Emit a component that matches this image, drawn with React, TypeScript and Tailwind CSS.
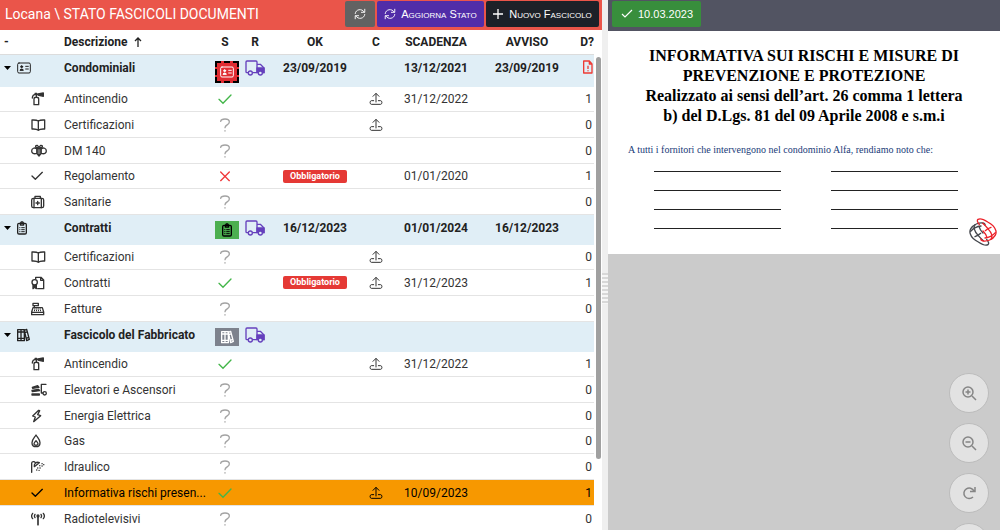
import React, { useState } from 'react';
import clsx from 'clsx';

type IconName =
  | 'card' | 'clipboard' | 'books' | 'extinguisher' | 'book' | 'bee' | 'check' | 'medkit'
  | 'certificate' | 'register' | 'elevator' | 'bolt' | 'flame' | 'shower' | 'antenna';

type Status = 'ok' | 'unknown' | 'missing';

interface Entry {
  icon: IconName;
  name: string;
  status: Status;
  required?: boolean;
  upload?: boolean;
  due?: string;
  docs: number;
  selected?: boolean;
}

interface Group {
  icon: IconName;
  name: string;
  badge: string;
  ok?: string;
  due?: string;
  notice?: string;
  alert?: boolean;
  entries: Entry[];
}

const groups: Group[] = [
  {
    icon: 'card',
    name: 'Condominiali',
    badge: 'h-[22px] bg-[#e02d33] text-white border-2 border-dashed border-black',
    ok: '23/09/2019',
    due: '13/12/2021',
    notice: '23/09/2019',
    alert: true,
    entries: [
      { icon: 'extinguisher', name: 'Antincendio', status: 'ok', upload: true, due: '31/12/2022', docs: 1 },
      { icon: 'book', name: 'Certificazioni', status: 'unknown', upload: true, docs: 0 },
      { icon: 'bee', name: 'DM 140', status: 'unknown', docs: 0 },
      { icon: 'check', name: 'Regolamento', status: 'missing', required: true, due: '01/01/2020', docs: 1 },
      { icon: 'medkit', name: 'Sanitarie', status: 'unknown', docs: 0 },
    ],
  },
  {
    icon: 'clipboard',
    name: 'Contratti',
    badge: 'h-[18px] bg-[#4caf50] text-black',
    ok: '16/12/2023',
    due: '01/01/2024',
    notice: '16/12/2023',
    entries: [
      { icon: 'book', name: 'Certificazioni', status: 'unknown', upload: true, docs: 0 },
      { icon: 'certificate', name: 'Contratti', status: 'ok', required: true, upload: true, due: '31/12/2023', docs: 1 },
      { icon: 'register', name: 'Fatture', status: 'unknown', docs: 0 },
    ],
  },
  {
    icon: 'books',
    name: 'Fascicolo del Fabbricato',
    badge: 'h-[18px] bg-[#7d828d] text-white',
    entries: [
      { icon: 'extinguisher', name: 'Antincendio', status: 'ok', upload: true, due: '31/12/2022', docs: 1 },
      { icon: 'elevator', name: 'Elevatori e Ascensori', status: 'unknown', docs: 0 },
      { icon: 'bolt', name: 'Energia Elettrica', status: 'unknown', docs: 0 },
      { icon: 'flame', name: 'Gas', status: 'unknown', docs: 0 },
      { icon: 'shower', name: 'Idraulico', status: 'unknown', docs: 0 },
      { icon: 'check', name: 'Informativa rischi presen...', status: 'ok', upload: true, due: '10/09/2023', docs: 1, selected: true },
      { icon: 'antenna', name: 'Radiotelevisivi', status: 'unknown', docs: 0 },
    ],
  },
];

// Drawn on a 42 unit tall grid, shown at a third of that size
const icons: Record<IconName, { width: number; art: React.ReactNode }> = {
  card: {
    width: 42,
    art: (
      <>
        <rect x="2" y="6" width="38" height="30" rx="4" strokeWidth="3" />
        <circle cx="14" cy="17" r="3" fill="currentColor" strokeWidth="3" />
        <path d="M9 27c0-4 10-4 10 0z" fill="currentColor" strokeWidth="3" />
        <path d="M26 16h8M26 24h8" strokeWidth="3" />
      </>
    ),
  },
  clipboard: {
    width: 30,
    art: (
      <>
        <rect x="2" y="7" width="26" height="32" rx="4" />
        <path d="M10 12V7l3-4h4l3 4v5z" />
        <path d="M14 20h8M14 26h8M14 32h8M8 20h1M8 26h1M8 32h1" strokeWidth="3" />
      </>
    ),
  },
  books: {
    width: 39,
    art: (
      <>
        <path d="M2 5h10v33H2zM12 5h10v33H12zM2 12h20M2 31h20" />
        <path d="M22 7l7-3 8 30-8 4zM24 14l7-3M28 31l7-3" />
      </>
    ),
  },
  extinguisher: {
    width: 48,
    art: (
      <>
        <path d="M9 38V21c0-7 14-7 14 0v17zM16 15V7M4 18C4 10 9 7 16 7h5M12 4h5" />
        <path d="M21 6l16-3v10l-16-4z" fill="currentColor" />
      </>
    ),
  },
  book: {
    width: 48,
    art: <path d="M22 9C16 5 8 6 3 6v27c7 0 14-1 19 4 5-5 12-4 19-4V6c-5 0-13-1-19 3zm0 0v27" />,
  },
  bee: {
    width: 48,
    art: (
      <>
        <path d="M18 15C11 9 2 13 2 21c0 7 6 10 16 7zM30 15c7-6 16-2 16 6 0 7-6 10-16 7z" />
        <path d="M18 14h12v15l-6 7-6-7zM24 12v23" />
        <path d="M20 11c-9 1-7-8-1-7l5 6 5-6c6-1 8 8-1 7" />
      </>
    ),
  },
  check: { width: 48, art: <path d="M3 21l10 10L34 10" /> },
  medkit: {
    width: 48,
    art: (
      <>
        <rect x="2" y="10" width="36" height="28" rx="5" />
        <path d="M12 10V4h16v6M9 10v28M31 10v28M20 19v10M15 24h10" />
      </>
    ),
  },
  certificate: {
    width: 48,
    art: (
      <>
        <path d="M14 9V4h16l8 8v26H20M29 4v9h9" />
        <circle cx="11" cy="19" r="8" />
        <path d="M6 26v12l5-4 5 4V26" fill="currentColor" />
      </>
    ),
  },
  register: {
    width: 48,
    art: (
      <>
        <path d="M6 17h28l4 13v8H2v-8zM2 31h36M10 17v-6M6 4h16v7H6z" />
        <path d="M10 21h20M9 26h22" strokeDasharray="3 3" strokeWidth="4" strokeLinecap="butt" />
      </>
    ),
  },
  elevator: {
    width: 48,
    art: (
      <>
        <path d="M4 13l16-5 4 5-19 3zM3 22l20-3 3 4-22 3zM3 33h22v3H3z" fill="currentColor" />
        <path d="M45 4H31v26h4" />
        <circle cx="41" cy="31" r="5" />
      </>
    ),
  },
  bolt: { width: 48, art: <path d="M23 4L5 21l8 3-5 14 21-18-9-3 6-12z" /> },
  flame: {
    width: 48,
    art: (
      <>
        <path d="M15 3C10 11 3 16 3 26c0 8 5 12 12 12s12-4 12-12c0-10-7-15-12-23z" />
        <path d="M15 20c-3 4-6 6-6 10 0 5 12 5 12 0 0-4-3-6-6-10z" />
      </>
    ),
  },
  shower: {
    width: 48,
    art: (
      <>
        <path d="M2 37V10c0-6 8-7 11-2" />
        <path d="M10 20c-2-10 7-16 15-12z" />
        <path d="M26 17h.5M33 11h.5M20 24h.5M27 24h.5M33 18h.5M17 30h.5M24 31h.5M38 14h.5" />
      </>
    ),
  },
  antenna: {
    width: 48,
    art: (
      <>
        <path d="M21 14v24" strokeWidth="5" />
        <circle cx="21" cy="12" r="3" fill="currentColor" />
        <path d="M12 7c-2 3-2 7 0 10M30 7c2 3 2 7 0 10M5 4c-4 5-4 11 0 16M37 4c4 5 4 11 0 16" />
      </>
    ),
  },
};

const Icon: React.FC<{ name: IconName }> = ({ name }) => {
  const { width, art } = icons[name];
  return (
    <svg
      width={width / 3}
      height={14}
      viewBox={`0 0 ${width} 42`}
      fill="none"
      stroke="currentColor"
      strokeWidth="4"
      strokeLinecap="round"
      strokeLinejoin="round"
      aria-hidden="true"
    >
      {art}
    </svg>
  );
};

const StatusIcon: React.FC<{ status: Status }> = ({ status }) => (
  <svg width="14" height="14" viewBox="0 0 42 42" fill="none" strokeWidth="4" strokeLinecap="round" className="mx-auto">
    {status === 'ok' && <path d="M3 22l12 12L39 9" stroke="#43b649" />}
    {status === 'missing' && <path d="M8 9l26 26M34 9L8 35" stroke="#f0383a" />}
    {status === 'unknown' && (
      <path d="M8 10c1-5 5-7 13-7 9 0 13 3 13 9 0 9-13 8-13 17M21 38v1" stroke="#a3a3a3" strokeLinejoin="round" />
    )}
  </svg>
);

const UploadIcon = () => (
  <svg width="14" height="14" viewBox="0 0 42 42" fill="none" stroke="currentColor" strokeWidth="3" strokeLinejoin="round" strokeLinecap="round" className="mx-auto">
    <path d="M21 30V5M12 13l9-9 9 9M14 26H7c-5 0-5 11 0 11h28c5 0 5-11 0-11h-7" />
  </svg>
);

const TruckIcon = () => (
  <svg width="20" height="16" viewBox="0 0 60 48" fill="none" stroke="#6540bd" strokeWidth="4" strokeLinejoin="round" className="mx-auto">
    <path d="M10 38H6c-2 0-3-1-3-3V6c0-2 1-3 3-3h27c2 0 3 1 3 3v32H22M36 13h10l11 11v14h-3" />
    <path d="M36 24h21v14h-4a7 7 0 0 0-13 0h-4z" fill="#6540bd" />
    <circle cx="16" cy="39" r="6" fill="#e0eef6" />
    <circle cx="46" cy="39" r="6" fill="#e0eef6" />
  </svg>
);

const AlertFileIcon = () => (
  <svg width="10" height="14" viewBox="0 0 30 42" fill="none" stroke="#ee3b35" strokeWidth="4" strokeLinejoin="round" className="ml-auto">
    <path d="M2 3h17l8 9v27H2zM19 3v9h8M15 17v10M15 31v3" />
  </svg>
);

const SyncIcon = () => (
  <svg width="12" height="12" viewBox="0 0 39 39" fill="none" stroke="currentColor" strokeWidth="3" strokeLinecap="round" strokeLinejoin="round">
    <path d="M4 18C5 4 26 0 33 13M35 4v10H24M35 21C34 35 13 39 6 26M4 35V25h11" />
  </svg>
);

const GroupRow: React.FC<{ group: Group; open: boolean; onToggle: () => void }> = ({ group, open, onToggle }) => (
  <tr className={clsx('bg-[#e0eef6] font-bold align-top text-[#222]', group.alert ? 'h-8' : 'h-[30px]')}>
    <td className="pt-[6px] pl-1">
      <button onClick={onToggle} aria-label={group.name} aria-expanded={open} className="flex items-center gap-[6px]">
        <svg width="7" height="4" viewBox="0 0 7 4" className={clsx(!open && '-rotate-90')}>
          <path d="M0 0h7L3.500 4z" />
        </svg>
        <Icon name={group.icon} />
      </button>
    </td>
    <td className="pt-[5px] whitespace-nowrap">{group.name}</td>
    <td className="pt-[6px] pl-[5px]">
      <span className={clsx('flex w-6 items-center justify-center', group.badge)}>
        <Icon name={group.icon} />
      </span>
    </td>
    <td className="pt-[5px]"><TruckIcon /></td>
    <td className="pt-[5px] text-center">{group.ok}</td>
    <td />
    <td className="pt-[5px] text-center">{group.due}</td>
    <td className="pt-[5px] text-center">{group.notice}</td>
    <td className="pt-[5px] pr-px">{group.alert && <AlertFileIcon />}</td>
  </tr>
);

const EntryRow: React.FC<{ entry: Entry }> = ({ entry }) => (
  <tr
    className={clsx(
      'h-[26px] nth-2:h-[25px] nth-5:h-[25px] last:h-[26px] *:border-b *:border-[#e4e4e4]',
      entry.selected ? 'bg-[#f79800] text-black' : 'text-[#333]'
    )}
  >
    <td className="pl-[31px]"><Icon name={entry.icon} /></td>
    <td className="whitespace-nowrap">{entry.name}</td>
    <td><StatusIcon status={entry.status} /></td>
    <td />
    <td className="text-center">
      {entry.required && (
        <span className="block w-16 mx-auto rounded-xs bg-[#e53935] text-white text-[9px] leading-[13px] font-bold">
          Obbligatorio
        </span>
      )}
    </td>
    <td>{entry.upload && <UploadIcon />}</td>
    <td className="text-center">{entry.due}</td>
    <td />
    <td className="pr-[2px] text-right">{entry.docs}</td>
  </tr>
);

const FolderTable = () => {
  const [closed, setClosed] = useState<string[]>([]);

  const toggle = (name: string) =>
    setClosed(closed.includes(name) ? closed.filter((n) => n !== name) : [...closed, name]);

  return (
    <table className="w-full table-fixed border-separate border-spacing-0 text-xs">
      <colgroup>
        <col className="w-16" />
        <col />
        <col className="w-[30px]" />
        <col className="w-[30px]" />
        <col className="w-[90px]" />
        <col className="w-8" />
        <col className="w-[88px]" />
        <col className="w-[94px]" />
        <col className="w-5" />
      </colgroup>
      <thead>
        <tr className="h-[25px] text-[#222] *:border-b *:border-[#dcdcdc] *:p-0 *:font-bold">
          <th className="text-left"><span className="pl-1">-</span></th>
          <th className="text-left">
            <span className="flex items-center gap-[6px]">
              Descrizione
              <svg width="8" height="10" viewBox="0 0 8 10" fill="none" stroke="currentColor" strokeWidth="1.3">
                <path d="M4 10V1M1 4l3-3 3 3" />
              </svg>
            </span>
          </th>
          <th>S</th>
          <th>R</th>
          <th>OK</th>
          <th>C</th>
          <th>SCADENZA</th>
          <th>AVVISO</th>
          <th className="text-right">D?</th>
        </tr>
      </thead>
      {groups.map((group) => {
        const open = !closed.includes(group.name);
        return (
          <tbody key={group.name}>
            <GroupRow group={group} open={open} onToggle={() => toggle(group.name)} />
            {open && group.entries.map((entry) => <EntryRow key={entry.name} entry={entry} />)}
          </tbody>
        );
      })}
    </table>
  );
};

const Logo = () => (
  <svg width="28" height="28" viewBox="0 0 84 84" fill="none" strokeWidth="4" strokeLinecap="round" className="absolute right-[3px] bottom-[8px]">
    <g stroke="#44474d">
      <path d="M48 21C50 15 36 12 22 18 6 25 0 38 4 48c3 9 12 18 24 24 12 8 24 11 29 8 4-3 1-10-4-16" />
      <path d="M18 20c-6 8 0 22 10 33 5 6 10 11 15 15M5 40c7-8 20-15 31-16" />
      <path d="M30 25c2 8 6 14 12 20M18 56c6-2 12-5 17-10" />
    </g>
    <g stroke="#ec2028">
      <path d="M36 63c-2 6 12 9 26 3 16-7 22-20 18-30-3-9-12-18-24-24C44 4 32 1 27 4c-4 3-1 10 4 16" />
      <path d="M66 64c6-8 0-22-10-33-5-6-10-11-15-15M79 44c-7 8-20 15-31 16" />
      <path d="M54 59c-2-8-6-14-12-20M66 28c-6 2-12 5-17 10" />
    </g>
  </svg>
);

const zoomButton = 'flex size-10 items-center justify-center rounded-full border border-[#bcbcbc] bg-[#e2e2e2] text-[#858585]';

const Preview = () => (
  <section className="flex min-w-0 flex-1 flex-col bg-[#cbcbcb]">
    <header className="flex h-[31px] shrink-0 items-start bg-[#525462] px-1 pt-px">
      <button className="flex h-[26px] w-[89px] items-center gap-[5px] rounded-xs bg-[#388e3c] pl-[9px] text-[11px] text-white font-['Liberation_Sans',Arial,sans-serif]">
        <svg width="12" height="10" viewBox="0 0 12 10" fill="none" stroke="currentColor" strokeWidth="1.2">
          <path d="M1 5l3 3 7-7" />
        </svg>
        10.03.2023
      </button>
    </header>
    <article className="relative h-[223px] shrink-0 bg-white pt-[15px] font-['Liberation_Serif',serif]">
      <h1 className="text-center text-[16px] leading-5 font-bold text-black">
        INFORMATIVA SUI RISCHI E MISURE DI
        <br />
        PREVENZIONE E PROTEZIONE
        <br />
        Realizzato ai sensi dell’art. 26 comma 1 lettera
        <br />
        b) del D.Lgs. 81 del 09 Aprile 2008 e s.m.i
      </h1>
      <p className="mt-4 pl-5 text-[10px] leading-4 text-[#203a78]">
        A tutti i fornitori che intervengono nel condominio Alfa, rendiamo noto che:
      </p>
      <div className="mt-[13px] flex flex-col gap-[18px] pr-[42px] pl-[46px]">
        {[1, 2, 3, 4].map((n) => (
          <div key={n} className="flex justify-between">
            <hr className="w-[127px] border-t border-[#222]" />
            <hr className="w-[127px] border-t border-[#222]" />
          </div>
        ))}
      </div>
      <Logo />
    </article>
    <div className="relative flex-1 overflow-hidden">
      <div className="absolute right-[11px] -bottom-[33px] flex flex-col gap-[10px]">
        <button className={zoomButton} aria-label="Ingrandisci">
          <svg width="15" height="15" viewBox="0 0 15 15" fill="none" stroke="currentColor" strokeWidth="1.5">
            <path d="M10 10l4 4M3.500 6h5M6 3.500v5" />
            <circle cx="6" cy="6" r="5" />
          </svg>
        </button>
        <button className={zoomButton} aria-label="Riduci">
          <svg width="15" height="15" viewBox="0 0 15 15" fill="none" stroke="currentColor" strokeWidth="1.5">
            <path d="M10 10l4 4M3.500 6h5" />
            <circle cx="6" cy="6" r="5" />
          </svg>
        </button>
        <button className={zoomButton} aria-label="Ruota">
          <svg width="14" height="14" viewBox="0 0 14 14" fill="none" stroke="currentColor" strokeWidth="1.5">
            <path d="M11 11a5.300 5.300 0 1 1 1-6M13 1v4.500H8" />
          </svg>
        </button>
        <button className={zoomButton} aria-label="Altro" />
      </div>
    </div>
  </section>
);

const toolbarButton =
  "flex h-[26px] shrink-0 items-center justify-center rounded-xs text-white text-[11px] whitespace-nowrap font-['Liberation_Sans',Arial,sans-serif] [font-variant:small-caps]";

export default function App() {
  return (
    <div className="flex h-screen overflow-hidden bg-white font-[Roboto,sans-serif]">
      <section className="flex w-[60.2%] flex-col">
        <header className="flex h-[30px] shrink-0 items-start gap-[2px] bg-[#ea554a] pt-px pr-[3px] pl-[5px]">
          <h2 className="mr-auto text-sm leading-[26px] whitespace-nowrap text-white">Locana \ STATO FASCICOLI DOCUMENTI</h2>
          <button className={clsx(toolbarButton, 'w-[30px] bg-[#626262]')} aria-label="Ricarica">
            <SyncIcon />
          </button>
          <button className={clsx(toolbarButton, 'w-[107px] gap-[5px] bg-[#512da8]')}>
            <SyncIcon />
            Aggiorna Stato
          </button>
          <button className={clsx(toolbarButton, 'w-[113px] gap-[6px] bg-[#1d2128]')}>
            <svg width="10" height="10" viewBox="0 0 10 10" stroke="currentColor" strokeWidth="1.3">
              <path d="M5 0v10M0 5h10" />
            </svg>
            Nuovo Fascicolo
          </button>
        </header>
        <div className="flex min-h-0 flex-1">
          <div className="min-w-0 flex-1 overflow-hidden">
            <FolderTable />
          </div>
          <div className="w-2 pt-[27px] pl-[2px]">
            <div className="h-[85%] w-[5px] rounded-full bg-[#a0a0a0]" />
          </div>
        </div>
      </section>
      <div className="flex w-[6px] items-center bg-[#efefef] pt-[46px]">
        <div className="h-[31px] w-full bg-[repeating-linear-gradient(#d8d8d8_0_2px,#f6f6f6_2px_4px)]" />
      </div>
      <Preview />
    </div>
  );
}
